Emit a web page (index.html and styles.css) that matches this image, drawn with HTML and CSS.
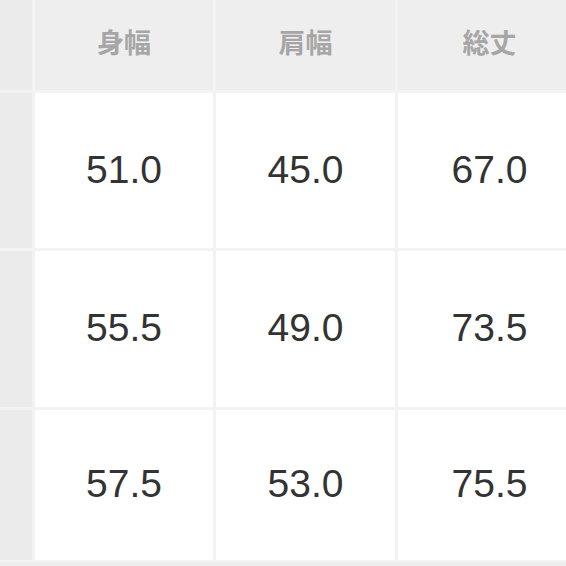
FILE: index.html
```html
<!DOCTYPE html>
<html lang="ja">
<head>
<meta charset="utf-8">
<link rel="stylesheet" href="styles.css">
</head>
<body>
<div class="sheet">
  <div class="table">
    <div class="corner"></div>
    <div class="head">身幅</div>
    <div class="head">肩幅</div>
    <div class="head">総丈</div>

    <div class="side"></div>
    <div class="cell">51.0</div>
    <div class="cell">45.0</div>
    <div class="cell">67.0</div>

    <div class="side"></div>
    <div class="cell">55.5</div>
    <div class="cell">49.0</div>
    <div class="cell">73.5</div>

    <div class="side"></div>
    <div class="cell">57.5</div>
    <div class="cell">53.0</div>
    <div class="cell">75.5</div>
  </div>
</div>
</body>
</html>
```

FILE: styles.css
```css
html, body {
  margin: 0;
  padding: 0;
  background: #ececec;
}

.sheet {
  width: 566px;
  height: 566px;
  overflow: hidden;
  background: #ececec;
}

.table {
  display: grid;
  grid-template-columns: 32px 178px 179px 183px;
  grid-template-rows: 90px 155px 156px 150px;
  gap: 3px;
  background: #f3f3f3;
  padding-bottom: 2px;
  width: max-content;
}

.corner,
.side {
  background: #ebebeb;
}

.head {
  background: #eeeeee;
  color: #a6a6a6;
  font-family: "Noto Sans CJK JP", "Noto Sans", sans-serif;
  font-weight: 700;
  font-size: 27px;
  display: flex;
  align-items: center;
  justify-content: center;
  padding-bottom: 7px;
  box-sizing: border-box;
}

.cell {
  background: #ffffff;
  color: #333333;
  font-family: "Liberation Sans", Arial, sans-serif;
  font-size: 39px;
  display: flex;
  align-items: center;
  justify-content: center;
  padding-bottom: 2px;
  box-sizing: border-box;
}
```
